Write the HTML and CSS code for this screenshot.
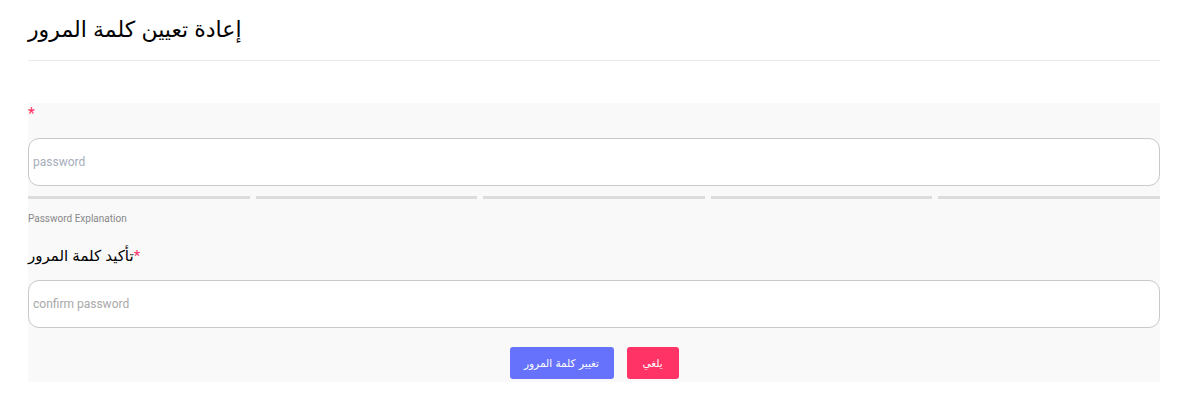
FILE: index.html
```html
<!DOCTYPE html>
<html lang="ar">
<head>
<meta charset="utf-8">
<link rel="stylesheet" href="styles.css">
</head>
<body>
<div class="page">
  <header class="head">
    <h1 class="title">إعادة تعيين كلمة المرور</h1>
  </header>
  <form class="form">
    <div class="label-row"><span class="req">*</span></div>
    <input class="field field-first" type="password" placeholder="password">
    <div class="bars">
      <span class="bar"></span><span class="bar"></span><span class="bar"></span><span class="bar"></span><span class="bar"></span>
    </div>
    <div class="explain">Password Explanation</div>
    <div class="label">تأكيد كلمة المرور<span class="req">*</span></div>
    <input class="field" type="password" placeholder="confirm password">
    <div class="actions">
      <button type="button" class="btn btn-primary">تغيير كلمة المرور</button>
      <button type="button" class="btn btn-danger">يلغي</button>
    </div>
  </form>
</div>
</body>
</html>
```
FILE: styles.css
```css
* { box-sizing: border-box; }
html, body { margin: 0; padding: 0; background: #fff; }
body { font-family: "Liberation Sans", "DejaVu Sans", Arial, sans-serif; color: #000; }
.page { padding: 0 20px 0 28px; }
.head { border-bottom: 1px solid #e9e9e9; padding: 9px 0 10px; margin-bottom: 42px; }
.title { margin: 0; font-size: 22px; font-weight: normal; line-height: 41px; }
.form { background: #f9f9f9; display: flex; flex-direction: column; padding-bottom: 3px; }
.label-row { height: 18px; padding-top: 2px; line-height: 18px; font-size: 16px; }
.req { color: #ff3366; font-family: Roboto, sans-serif; }
.field {
  display: block; width: 100%; height: 48px; border: 1px solid #c9c9c9; border-radius: 11px;
  background: #fff; padding: 0 4px; font-family: Roboto, sans-serif; font-size: 12px; color: #333; outline: none;
}
.field::placeholder { color: #a9a9a9; }
.field-first::placeholder { color: #a6adbb; }
.field-first { margin-top: 17px; }
.bars { display: flex; gap: 6px; margin-top: 10px; }
.bar { flex: 1; height: 3px; background: #dcdcdc; }
.explain { margin-top: 13px; font-family: Roboto, sans-serif; font-size: 10px; line-height: 14px; color: #888; }
.label { margin-top: 19px; font-size: 15px; line-height: 22px; margin-bottom: 13px; }
.actions { display: flex; justify-content: center; gap: 13px; margin-top: 19px; }
.btn { height: 32px; border: none; border-radius: 3px; color: #fff; font-family: "DejaVu Sans", sans-serif; font-size: 10.5px; padding: 0; }
.btn-primary { background: #6672fb; width: 104px; }
.btn-danger { background: #ff3366; width: 52px; }
```
